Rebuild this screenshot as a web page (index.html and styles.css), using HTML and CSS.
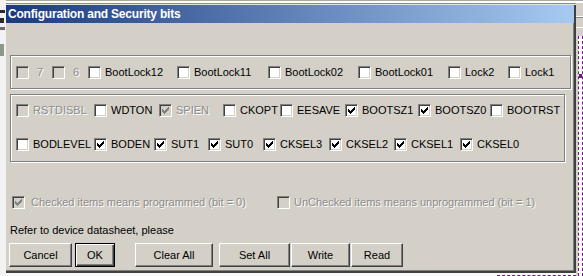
FILE: index.html
```html
<!DOCTYPE html>
<html lang="en">
<head>
    <meta charset="UTF-8">
    <title>Configuration and Security bits</title>
    <link rel="stylesheet" href="styles.css">
</head>
<body>
    <svg width="0" height="0" class="defs">
        <symbol id="tick" viewBox="1 1 11 11">
            <path d="M3 5H4V6H5V7H6V6H7V5H8V4H9V3H10V6H9V7H8V8H7V9H6V10H5V9H4V8H3Z"/>
        </symbol>
    </svg>

    <div class="screen">
        <div class="side-left">
            <span class="mark m1"></span>
            <span class="mark m2"></span>
            <span class="mark m3"></span>
            <span class="mark m4"></span>
        </div>

        <div class="main">
            <div class="top-edge"></div>

            <div class="dialog">
                <div class="titlebar">Configuration and Security bits</div>

                <div class="content">
                    <div class="group g1">
                        <div class="row lock-row">
                            <label class="item dis bit"><span class="cb"></span>7</label>
                            <label class="item dis bit"><span class="cb"></span>6</label>
                            <label class="item"><span class="cb"></span>BootLock12</label>
                            <label class="item"><span class="cb"></span>BootLock11</label>
                            <label class="item"><span class="cb"></span>BootLock02</label>
                            <label class="item"><span class="cb"></span>BootLock01</label>
                            <label class="item"><span class="cb"></span>Lock2</label>
                            <label class="item"><span class="cb"></span>Lock1</label>
                        </div>
                    </div>

                    <div class="group g2">
                        <div class="row high-row">
                            <label class="item dis"><span class="cb"></span>RSTDISBL</label>
                            <label class="item"><span class="cb"></span>WDTON</label>
                            <label class="item dis"><span class="cb"><svg><use href="#tick"/></svg></span>SPIEN</label>
                            <label class="item"><span class="cb"></span>CKOPT</label>
                            <label class="item"><span class="cb"></span>EESAVE</label>
                            <label class="item"><span class="cb"><svg><use href="#tick"/></svg></span>BOOTSZ1</label>
                            <label class="item"><span class="cb"><svg><use href="#tick"/></svg></span>BOOTSZ0</label>
                            <label class="item"><span class="cb"></span>BOOTRST</label>
                        </div>
                        <div class="row low-row">
                            <label class="item"><span class="cb"></span>BODLEVEL</label>
                            <label class="item"><span class="cb"><svg><use href="#tick"/></svg></span>BODEN</label>
                            <label class="item"><span class="cb"><svg><use href="#tick"/></svg></span>SUT1</label>
                            <label class="item"><span class="cb"><svg><use href="#tick"/></svg></span>SUT0</label>
                            <label class="item"><span class="cb"><svg><use href="#tick"/></svg></span>CKSEL3</label>
                            <label class="item"><span class="cb"><svg><use href="#tick"/></svg></span>CKSEL2</label>
                            <label class="item"><span class="cb"><svg><use href="#tick"/></svg></span>CKSEL1</label>
                            <label class="item"><span class="cb"><svg><use href="#tick"/></svg></span>CKSEL0</label>
                        </div>
                    </div>

                    <div class="row legend-row">
                        <label class="item dis wide"><span class="cb"><svg><use href="#tick"/></svg></span>Checked items means programmed (bit = 0)</label>
                        <label class="item dis"><span class="cb"></span>UnChecked items means unprogrammed (bit = 1)</label>
                    </div>

                    <p class="note">Refer to device datasheet, please</p>

                    <div class="buttons">
                        <button class="btn cancel">Cancel</button>
                        <button class="btn ok">OK</button>
                        <button class="btn clear">Clear All</button>
                        <button class="btn setall">Set All</button>
                        <button class="btn write">Write</button>
                        <button class="btn read">Read</button>
                    </div>
                </div>
            </div>

            <div class="bottom-edge"><span class="dots"></span></div>
        </div>

        <div class="side-right">
            <div class="toolbar-bit"></div>
            <div class="editor-bit">
                <span class="blob"></span>
            </div>
        </div>
    </div>
</body>
</html>
```

FILE: styles.css
```css
body {
    margin: 0;
    background: #d4d0c8;
    font-family: "Liberation Sans", Arial, sans-serif;
    font-size: 11px;
    color: #000;
}
.defs {
    position: absolute;
}
.screen {
    display: flex;
    width: 583px;
    height: 276px;
    overflow: hidden;
}

/* bits of other windows around the dialog */
.side-left {
    width: 6px;
    background: #f2f2f2;
    display: flex;
    flex-direction: column;
    align-items: flex-start;
}
.mark {
    display: block;
    width: 5px;
    background: #2a2a2a;
}
.m1 { height: 3px; margin-top: 10px; }
.m2 { height: 5px; margin-top: 5px; width: 4px; }
.m3 { height: 3px; margin-top: 4px; background: #6c6c6c; }
.m4 { height: 12px; margin-top: 14px; background: #8f968a; width: 4px; }

.main {
    width: 570px;
    display: flex;
    flex-direction: column;
}
.top-edge {
    height: 5px;
    background: linear-gradient(#a8a8a8 0 1px, #fff 1px 3px, #8c8c8c 3px 4px, #e4e2dc 4px);
}
.bottom-edge {
    flex: 1;
    background: #fafafa;
}
.dots {
    display: block;
    margin: 2px 0 0 491px;
    border-top: 1px dashed #6b1f7a;
}
.side-right {
    width: 7px;
    display: flex;
    flex-direction: column;
}
.toolbar-bit {
    height: 36px;
    background: linear-gradient(#a8a8a8 0 1px, #fff 1px 3px, #d4d0c8 3px 16px, #fff 16px 17px, #888 17px 18px, #d4d0c8 18px 27px, #fff 27px 28px, #d4d0c8 28px);
}
.editor-bit {
    flex: 1;
    background: #fff;
    border-left: 1px dashed #6b1f7a;
    margin-left: 2px;
    border-right: 1px dashed #6b1f7a;
}
.blob {
    display: block;
    height: 4px;
    margin-top: 38px;
    background: #6b1f7a;
}

/* dialog */
.dialog {
    height: 268px;
    box-sizing: border-box;
    border-right: 2px solid #404040;
    border-bottom: 2px solid #404040;
    box-shadow: inset -1px -1px #808080;
    display: flex;
    flex-direction: column;
}
.titlebar {
    height: 18px;
    line-height: 18px;
    padding-left: 2px;
    background: linear-gradient(to right, #1a3a7e, #a6caf0);
    color: #fff;
    font-weight: bold;
    font-size: 12px;
    letter-spacing: -0.2px;
}
.content {
    padding-left: 4px;
    display: flex;
    flex-direction: column;
}
.group {
    box-sizing: border-box;
    border: 1px solid #808080;
    box-shadow: inset 1px 1px #fff, 1px 1px #fff;
    padding-left: 5px;
}
.g1 {
    margin-top: 32px;
    width: 561px;
    height: 34px;
}
.g2 {
    margin-top: 5px;
    width: 555px;
    height: 68px;
    display: flex;
    flex-direction: column;
    gap: 4px;
}
.row {
    display: grid;
    align-items: center;
}
.lock-row {
    height: 32px;
    grid-template-columns: 36px 36px 89px 91px 90px 90px 60px auto;
}
.high-row {
    height: 30px;
    grid-template-columns: 78px 65px 64px 57px 65px 73px 72px auto;
}
.low-row {
    height: 30px;
    grid-template-columns: 78px 60px 54px 55px 66px 65px 66px auto;
}
.legend-row {
    margin: 32px 0 0 2px;
    height: 16px;
    grid-template-columns: 265px auto;
}
.item {
    display: flex;
    align-items: center;
    gap: 4px;
    white-space: nowrap;
}
.item.bit {
    gap: 8px;
}
.item.wide {
    gap: 6px;
}
.item.dis {
    color: #8c8c8c;
    text-shadow: 1px 1px #fff;
}
.cb {
    box-sizing: border-box;
    width: 13px;
    height: 13px;
    flex: none;
    background: #fff;
    border: 1px solid;
    border-color: #808080 #fff #fff #808080;
    box-shadow: inset 1px 1px #404040, inset -1px -1px #d4d0c8;
}
.cb svg {
    display: block;
    width: 11px;
    height: 11px;
    fill: #000;
    shape-rendering: crispEdges;
}
.dis .cb {
    background: #d4d0c8;
}
.dis .cb svg {
    fill: #808080;
}
.note {
    margin: 13px 0 0;
    height: 14px;
    line-height: 14px;
}

/* buttons */
.buttons {
    margin: 6px 0 0 -1px;
    display: flex;
}
.btn {
    box-sizing: border-box;
    height: 24px;
    padding: 0;
    background: #d4d0c8;
    font: inherit;
    color: #000;
    border: 1px solid;
    border-color: #fff #404040 #404040 #fff;
    box-shadow: inset -1px -1px #808080;
}
.btn.ok {
    border-color: #000;
    box-shadow: inset 1px 1px #fff, inset -1px -1px #404040, inset -2px -2px #808080;
}
.cancel { width: 63px; }
.ok { width: 40px; margin-left: 3px; }
.clear { width: 78px; margin-left: 20px; }
.setall { width: 71px; margin-left: 6px; }
.write { width: 59px; margin-left: 1px; }
.read { width: 52px; margin-left: 1px; }
```
